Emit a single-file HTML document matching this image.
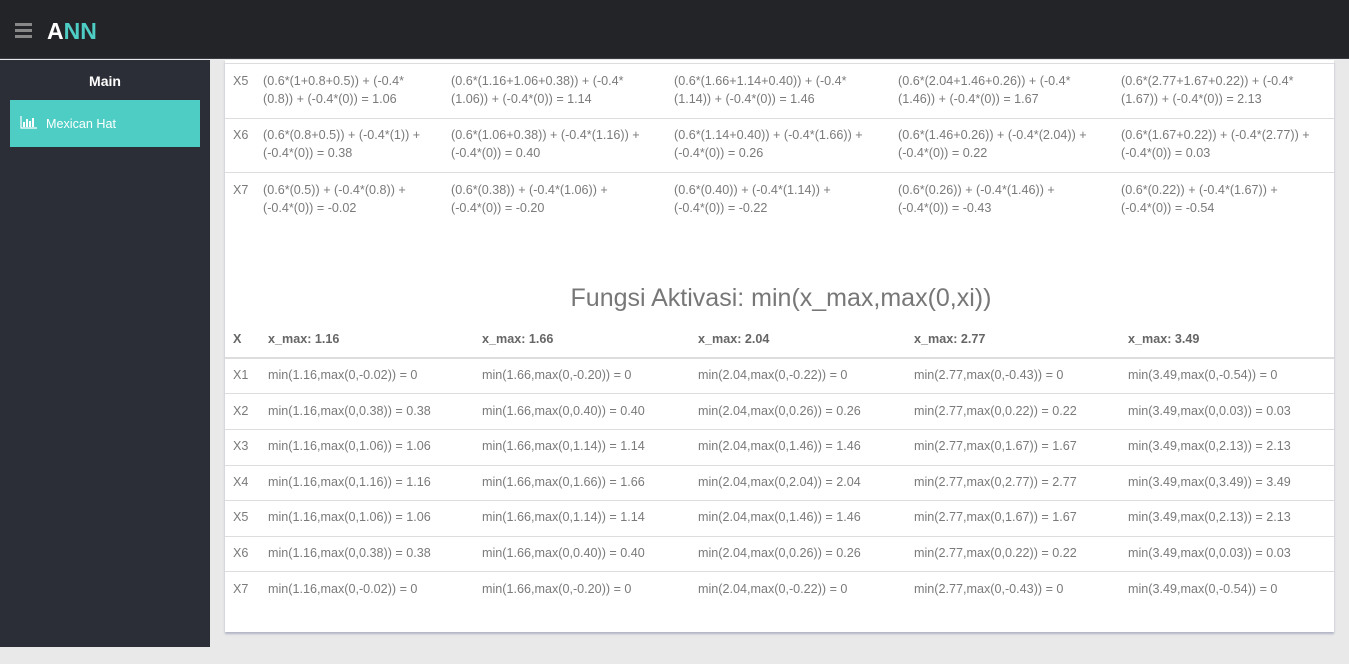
<!DOCTYPE html>
<html><head><meta charset="utf-8"><style>
*{margin:0;padding:0;box-sizing:border-box}
body{width:1349px;height:664px;background:#e9e9e9;font-family:"Liberation Sans",sans-serif;position:relative;overflow:hidden;color:#777}
.hdr{position:absolute;left:0;top:0;width:1349px;height:59px;background:#232428;border-bottom:1px solid #3a3c44}
.side{position:absolute;left:0;top:60px;width:210px;height:587px;background:#2c2e37}
.panel{position:absolute;left:225px;top:60px;width:1109px;height:572px;background:#fff;box-shadow:0 2px 2px #b0b4c4}
.t{position:absolute;font-size:12.6px;line-height:18px;white-space:nowrap;color:#7a7a7a}
.l{position:absolute;left:225px;width:1109px;height:1px;background:#ddd}
.b{font-weight:bold;color:#666}
</style></head><body>
<div class="hdr">
<div style="position:absolute;left:15px;top:23px;width:17px;height:3px;background:#888"></div>
<div style="position:absolute;left:15px;top:29px;width:17px;height:3px;background:#888"></div>
<div style="position:absolute;left:15px;top:35px;width:17px;height:3px;background:#888"></div>
<div style="position:absolute;left:47px;top:18px;font-size:23px;font-weight:bold;line-height:26px;color:#fff">A<span style="color:#4ecdc4">NN</span></div>
</div>
<div class="side">
<div style="position:absolute;left:0;width:210px;top:13px;text-align:center;color:#fff;font-size:14px;font-weight:bold">Main</div>
<div style="position:absolute;left:10px;top:40px;width:190px;height:47px;background:#4ecdc4">
<svg style="position:absolute;left:10px;top:16px" width="18" height="13" viewBox="0 0 18 13"><path d="M1 0V12H17" stroke="#fff" stroke-width="1.2" fill="none"/><rect x="3" y="6" width="2" height="5" fill="#fff"/><rect x="6" y="3" width="2" height="8" fill="#fff"/><rect x="9" y="5" width="2" height="6" fill="#fff"/><rect x="12" y="2" width="2" height="9" fill="#fff"/></svg>
<div style="position:absolute;left:36px;top:17px;color:#fff;font-size:12.6px">Mexican Hat</div>
</div>
</div>
<div class="panel"></div>
<div class="l" style="top:63px"></div>
<div class="l" style="top:118px"></div>
<div class="l" style="top:172px"></div>

<div class="t" style="left:233px;top:72px">X5</div>
<div class="t" style="left:263px;top:72px">(0.6*(1+0.8+0.5)) + (-0.4*<br>(0.8)) + (-0.4*(0)) = 1.06</div>
<div class="t" style="left:451px;top:72px">(0.6*(1.16+1.06+0.38)) + (-0.4*<br>(1.06)) + (-0.4*(0)) = 1.14</div>
<div class="t" style="left:674px;top:72px">(0.6*(1.66+1.14+0.40)) + (-0.4*<br>(1.14)) + (-0.4*(0)) = 1.46</div>
<div class="t" style="left:898px;top:72px">(0.6*(2.04+1.46+0.26)) + (-0.4*<br>(1.46)) + (-0.4*(0)) = 1.67</div>
<div class="t" style="left:1121px;top:72px">(0.6*(2.77+1.67+0.22)) + (-0.4*<br>(1.67)) + (-0.4*(0)) = 2.13</div>

<div class="t" style="left:233px;top:126px">X6</div>
<div class="t" style="left:263px;top:126px">(0.6*(0.8+0.5)) + (-0.4*(1)) +<br>(-0.4*(0)) = 0.38</div>
<div class="t" style="left:451px;top:126px">(0.6*(1.06+0.38)) + (-0.4*(1.16)) +<br>(-0.4*(0)) = 0.40</div>
<div class="t" style="left:674px;top:126px">(0.6*(1.14+0.40)) + (-0.4*(1.66)) +<br>(-0.4*(0)) = 0.26</div>
<div class="t" style="left:898px;top:126px">(0.6*(1.46+0.26)) + (-0.4*(2.04)) +<br>(-0.4*(0)) = 0.22</div>
<div class="t" style="left:1121px;top:126px">(0.6*(1.67+0.22)) + (-0.4*(2.77)) +<br>(-0.4*(0)) = 0.03</div>

<div class="t" style="left:233px;top:181px">X7</div>
<div class="t" style="left:263px;top:181px">(0.6*(0.5)) + (-0.4*(0.8)) +<br>(-0.4*(0)) = -0.02</div>
<div class="t" style="left:451px;top:181px">(0.6*(0.38)) + (-0.4*(1.06)) +<br>(-0.4*(0)) = -0.20</div>
<div class="t" style="left:674px;top:181px">(0.6*(0.40)) + (-0.4*(1.14)) +<br>(-0.4*(0)) = -0.22</div>
<div class="t" style="left:898px;top:181px">(0.6*(0.26)) + (-0.4*(1.46)) +<br>(-0.4*(0)) = -0.43</div>
<div class="t" style="left:1121px;top:181px">(0.6*(0.22)) + (-0.4*(1.67)) +<br>(-0.4*(0)) = -0.54</div>

<div style="position:absolute;left:225px;width:1109px;top:284px;text-align:center;font-size:25px;line-height:28px;color:#777;padding-left:3px">Fungsi Aktivasi: min(x_max,max(0,xi))</div>

<div class="t b" style="left:233px;top:330px">X</div>
<div class="t b" style="left:268px;top:330px">x_max: 1.16</div>
<div class="t b" style="left:482px;top:330px">x_max: 1.66</div>
<div class="t b" style="left:698px;top:330px">x_max: 2.04</div>
<div class="t b" style="left:914px;top:330px">x_max: 2.77</div>
<div class="t b" style="left:1128px;top:330px">x_max: 3.49</div>
<div class="l" style="top:357px;height:2px"></div>
<div class="l" style="top:393px"></div>
<div class="l" style="top:429px"></div>
<div class="l" style="top:465px"></div>
<div class="l" style="top:500px"></div>
<div class="l" style="top:536px"></div>
<div class="l" style="top:571px"></div>

<div class="t" style="left:233px;top:366px">X1</div><div class="t" style="left:268px;top:366px">min(1.16,max(0,-0.02)) = 0</div><div class="t" style="left:482px;top:366px">min(1.66,max(0,-0.20)) = 0</div><div class="t" style="left:698px;top:366px">min(2.04,max(0,-0.22)) = 0</div><div class="t" style="left:914px;top:366px">min(2.77,max(0,-0.43)) = 0</div><div class="t" style="left:1128px;top:366px">min(3.49,max(0,-0.54)) = 0</div>
<div class="t" style="left:233px;top:402px">X2</div><div class="t" style="left:268px;top:402px">min(1.16,max(0,0.38)) = 0.38</div><div class="t" style="left:482px;top:402px">min(1.66,max(0,0.40)) = 0.40</div><div class="t" style="left:698px;top:402px">min(2.04,max(0,0.26)) = 0.26</div><div class="t" style="left:914px;top:402px">min(2.77,max(0,0.22)) = 0.22</div><div class="t" style="left:1128px;top:402px">min(3.49,max(0,0.03)) = 0.03</div>
<div class="t" style="left:233px;top:437px">X3</div><div class="t" style="left:268px;top:437px">min(1.16,max(0,1.06)) = 1.06</div><div class="t" style="left:482px;top:437px">min(1.66,max(0,1.14)) = 1.14</div><div class="t" style="left:698px;top:437px">min(2.04,max(0,1.46)) = 1.46</div><div class="t" style="left:914px;top:437px">min(2.77,max(0,1.67)) = 1.67</div><div class="t" style="left:1128px;top:437px">min(3.49,max(0,2.13)) = 2.13</div>
<div class="t" style="left:233px;top:473px">X4</div><div class="t" style="left:268px;top:473px">min(1.16,max(0,1.16)) = 1.16</div><div class="t" style="left:482px;top:473px">min(1.66,max(0,1.66)) = 1.66</div><div class="t" style="left:698px;top:473px">min(2.04,max(0,2.04)) = 2.04</div><div class="t" style="left:914px;top:473px">min(2.77,max(0,2.77)) = 2.77</div><div class="t" style="left:1128px;top:473px">min(3.49,max(0,3.49)) = 3.49</div>
<div class="t" style="left:233px;top:508px">X5</div><div class="t" style="left:268px;top:508px">min(1.16,max(0,1.06)) = 1.06</div><div class="t" style="left:482px;top:508px">min(1.66,max(0,1.14)) = 1.14</div><div class="t" style="left:698px;top:508px">min(2.04,max(0,1.46)) = 1.46</div><div class="t" style="left:914px;top:508px">min(2.77,max(0,1.67)) = 1.67</div><div class="t" style="left:1128px;top:508px">min(3.49,max(0,2.13)) = 2.13</div>
<div class="t" style="left:233px;top:544px">X6</div><div class="t" style="left:268px;top:544px">min(1.16,max(0,0.38)) = 0.38</div><div class="t" style="left:482px;top:544px">min(1.66,max(0,0.40)) = 0.40</div><div class="t" style="left:698px;top:544px">min(2.04,max(0,0.26)) = 0.26</div><div class="t" style="left:914px;top:544px">min(2.77,max(0,0.22)) = 0.22</div><div class="t" style="left:1128px;top:544px">min(3.49,max(0,0.03)) = 0.03</div>
<div class="t" style="left:233px;top:580px">X7</div><div class="t" style="left:268px;top:580px">min(1.16,max(0,-0.02)) = 0</div><div class="t" style="left:482px;top:580px">min(1.66,max(0,-0.20)) = 0</div><div class="t" style="left:698px;top:580px">min(2.04,max(0,-0.22)) = 0</div><div class="t" style="left:914px;top:580px">min(2.77,max(0,-0.43)) = 0</div><div class="t" style="left:1128px;top:580px">min(3.49,max(0,-0.54)) = 0</div>
</body></html>
